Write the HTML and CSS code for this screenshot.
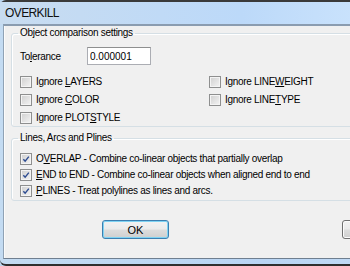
FILE: index.html
```html
<!DOCTYPE html>
<html lang="en">
<head>
    <meta charset="UTF-8">
    <title>OVERKILL</title>
    <link rel="stylesheet" href="styles.css">
</head>
<body>
    <div class="window">
        <div class="titlebar">OVERKILL</div>

        <div class="client">
            <!-- Object comparison settings -->
            <fieldset class="group group-compare">
                <legend>Object comparison settings</legend>
                <div class="tolerance-row">
                    <label class="tolerance-label" for="tolerance">To<u>l</u>erance</label>
                    <input class="textbox" id="tolerance" type="text" value="0.000001">
                </div>
                <div class="ignore-grid">
                    <div class="check"><span class="box"></span><span>Ignore <u>L</u>AYERS</span></div>
                    <div class="check"><span class="box"></span><span>Ignore LINE<u>W</u>EIGHT</span></div>
                    <div class="check"><span class="box"></span><span>Ignore <u>C</u>OLOR</span></div>
                    <div class="check"><span class="box"></span><span>Ignore LINE<u>T</u>YPE</span></div>
                    <div class="check"><span class="box"></span><span>Ignore PLOT<u>S</u>TYLE</span></div>
                </div>
            </fieldset>

            <!-- Lines, Arcs and Plines -->
            <fieldset class="group group-lines">
                <legend>Lines, Arcs and Plines</legend>
                <div class="check-list">
                    <div class="check">
                        <span class="box checked"><svg viewBox="0 0 12 12"><path d="M2.8 6.2 L5 8.6 L9.4 3.2"/></svg></span>
                        <span>O<u>V</u>ERLAP - Combine co-linear objects that partially overlap</span>
                    </div>
                    <div class="check">
                        <span class="box checked"><svg viewBox="0 0 12 12"><path d="M2.8 6.2 L5 8.6 L9.4 3.2"/></svg></span>
                        <span><u>E</u>ND to END - Combine co-linear objects when aligned end to end</span>
                    </div>
                    <div class="check">
                        <span class="box checked"><svg viewBox="0 0 12 12"><path d="M2.8 6.2 L5 8.6 L9.4 3.2"/></svg></span>
                        <span><u>P</u>LINES - Treat polylines as lines and arcs.</span>
                    </div>
                </div>
            </fieldset>

            <div class="buttons">
                <button class="btn btn-default">OK</button>
                <button class="btn btn-cancel" aria-label="Cancel"></button>
            </div>
        </div>
    </div>
</body>
</html>
```

FILE: styles.css
```css
:root {
    --frame-blue: #bcd6f0;
    --client-bg: #f0f0f0;
    --group-line: #d5dfe5;
}

body {
    margin: 0;
    overflow: hidden;
    background: var(--frame-blue);
    font-family: 'Liberation Sans', Arial, sans-serif;
    font-size: 10px;
    letter-spacing: -0.3px;
    color: #000;
}

.window {
    width: 440px;
    height: 266px;
    box-sizing: border-box;
    display: flex;
    flex-direction: column;
    background: linear-gradient(to right, #c3dbf2, #b9d5f4 60%, #c6def7);
    border-top: 2px solid #3a3a3a;
    border-bottom: 2px solid #2f2f2f;
    border-radius: 6px 0 0 6px;
    padding: 0 0 5px 3px;
}

.titlebar {
    height: 22px;
    line-height: 23px;
    font-size: 12px;
    letter-spacing: -0.6px;
    color: #101010;
    background: linear-gradient(to right, #c8dcf0, #bcd9f9 55%, #c9e2fc 80%, #bcd8f8);
    margin-left: -3px;
    padding-left: 5px;
}

.client {
    flex: 1;
    background: var(--client-bg);
    border-top: 2px solid #8a9cb0;
    border-left: 1px solid #8fa2b5;
    border-bottom: 1px solid #6f7f90;
    box-shadow: inset 1px 0 0 #fbfbfb;
    padding: 1px 0 0 7px;
}

.group {
    margin: 0;
    padding: 8px 0 2px 8px;
    border: 1px solid var(--group-line);
    border-radius: 3px;
    box-shadow: inset 1px 1px 0 #ffffff;
    width: 400px;
}

.group legend {
    padding: 0 2px;
    margin-left: -2px;
    line-height: 12px;
    color: #000;
}

.tolerance-row {
    display: flex;
    align-items: center;
    height: 18px;
}

.tolerance-label {
    width: 67px;
}

.textbox {
    box-sizing: border-box;
    width: 64px;
    height: 18px;
    margin: 0;
    padding: 0 2px;
    font: inherit;
    font-size: 10px;
    letter-spacing: 0;
    border: 1px solid #abadb3;
    border-top-color: #8e8f8f;
    background: #fff;
    color: #000;
}

.ignore-grid {
    display: grid;
    grid-template-columns: 189px auto;
    row-gap: 6px;
    margin-top: 11px;
}

.check {
    display: flex;
    align-items: center;
    height: 12px;
    line-height: 12px;
    white-space: nowrap;
}

.box {
    width: 10px;
    height: 10px;
    margin-right: 4px;
    border: 1px solid #8e8f8f;
    background: linear-gradient(135deg, #cfcfcf, #f4f4f4);
    box-shadow: inset 0 0 0 1px #f4f4f4;
    flex-shrink: 0;
}

.box svg {
    display: block;
    width: 10px;
    height: 10px;
}

.box svg path {
    fill: none;
    stroke: #2d4c91;
    stroke-width: 1.7;
}

.group-lines {
    margin-top: 5px;
    padding: 9px 0 3px 8px;
}

.check-list {
    display: flex;
    flex-direction: column;
    gap: 4px;
}

.buttons {
    display: flex;
    margin-top: 19px;
    padding-left: 91px;
}

.btn {
    box-sizing: border-box;
    width: 67px;
    height: 19px;
    padding: 0;
    font: inherit;
    font-size: 11px;
    letter-spacing: 0;
    color: #000;
    border-radius: 3px;
    background: linear-gradient(#f2f2f2, #ebebeb 48%, #dddddd 52%, #cfcfcf);
}

.btn-default {
    border: 1px solid #3c7fb1;
    box-shadow: inset 0 0 0 1px #7fd3f3;
}

.btn-cancel {
    margin-left: 173px;
    border: 1px solid #707070;
    box-shadow: inset 0 0 0 1px #fcfcfc;
}
```
